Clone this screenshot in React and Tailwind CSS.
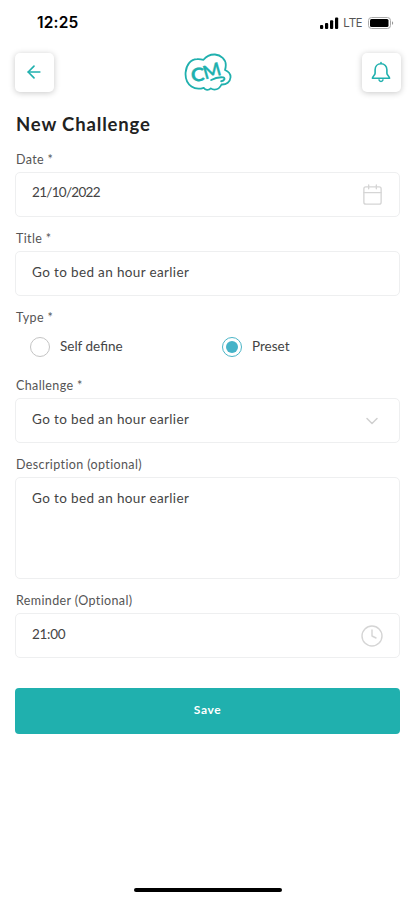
import { ArrowLeft, Calendar, ChevronDown, Clock } from 'lucide-react';

function StatusBar() {
  return (
    <div className="flex h-[46px] items-center justify-between pl-[37px] pr-[20px]">
      <span className="font-['Inter'] text-[15.5px] font-semibold leading-none tracking-[0.2px] text-black">12:25</span>
      <div className="flex items-center">
        <svg className="h-[12px] w-[19px]" viewBox="0 0 19 12" fill="#000">
          <rect x="0" y="8" width="3.2" height="4" rx="1" />
          <rect x="5" y="6" width="3.2" height="6" rx="1" />
          <rect x="10" y="3.2" width="3.2" height="8.8" rx="1" />
          <rect x="15" y="0.5" width="3.2" height="11.5" rx="1" />
        </svg>
        <span className="ml-[4px] w-[21px] font-['Open_Sans'] text-[12.5px] leading-none tracking-[-0.5px] text-[#555]">LTE</span>
        <svg className="ml-[4px] h-[12px] w-[27px]" viewBox="0 0 27 12">
          <rect x="0.5" y="0.5" width="22" height="11" rx="3" fill="none" stroke="#aaa" />
          <rect x="2" y="2" width="18.5" height="8" rx="1.5" fill="#000" />
          <path d="M24 4.2c1.6.5 1.6 3.1 0 3.6z" fill="#999" />
        </svg>
      </div>
    </div>
  );
}

function Logo() {
  return (
    <svg className="h-[39px] w-[48px]" viewBox="0 0 48 39" fill="none" stroke="#20b0ae" strokeLinecap="round" strokeLinejoin="round">
      <path
        strokeWidth="1.8"
        d="M19.5 6.8C22.5 3 26.5 1.3 31 1.5C37 2 41.8 6.5 41.8 12C41.8 13.8 41.5 15.5 41 17C44.5 18.5 46.8 21 46.5 24.5C46.2 28.8 42.5 31.8 37.5 31.5C36 34.8 33.5 36.6 30.5 36.6C29 36.6 27.8 36.2 26.8 35.4C24.5 37.6 21.3 37.2 19.7 34.8C16 36 11.5 36.3 7.5 33.5C3 30.2 1.2 25 1.6 19.5C2.3 11.5 6.8 6.3 13 6.2C15.2 6.1 17.5 6.3 19.5 6.8Z"
      />
      <g fill="#20b0ae" strokeWidth="0.3" className="font-['Lato'] text-[18.5px] font-bold">
        <text transform="translate(7.6 28.8) rotate(-5)" textLength="13.5" lengthAdjust="spacingAndGlyphs">C</text>
        <text transform="translate(21 26.6) rotate(-16)" textLength="18" lengthAdjust="spacingAndGlyphs" className="font-semibold">M</text>
      </g>
      <path strokeWidth="1.9" d="M27.2 27C31 24.9 36 24 39.3 24.4C41.6 25.2 40.3 28 37.2 28.2" />
    </svg>
  );
}

function BellIcon() {
  return (
    <svg className="h-[22px] w-[22px]" viewBox="0 0 22 22" fill="none" stroke="currentColor" strokeWidth="1.6" strokeLinecap="round" strokeLinejoin="round">
      <path d="M11 1.6V2.8M11 2.8C7.4 2.8 5.1 5.4 5.1 8.8V12.2C5.1 14.2 2.4 15.2 2.4 17.3H19.6C19.6 15.2 16.9 14.2 16.9 12.2V8.8C16.9 5.4 14.6 2.8 11 2.8Z" />
      <path d="M9 18.9C9.6 21 12.4 21 13 18.9" />
    </svg>
  );
}

function IconButton({ label, children }) {
  return (
    <button
      aria-label={label}
      className="flex h-[39px] w-[39px] items-center justify-center rounded-[5px] bg-white pr-[1px] pb-[1px] text-[#20b0ae] shadow-[0_1px_6px_rgba(0,0,0,0.22)]"
    >
      {children}
    </button>
  );
}

function Label({ children }) {
  return (
    <div className="mt-[13px] mb-[5px] h-[16px] whitespace-nowrap pl-px text-[12.5px] leading-[17px] tracking-[0.38px] text-[#555]">{children}</div>
  );
}

function Field({ value, icon, className = 'h-[45px]' }) {
  return (
    <div className={`flex items-start justify-between rounded-[5px] border border-[#eeeff0] bg-white pl-[16px] pr-[15px] ${className}`}>
      <span className="mt-[11px] whitespace-nowrap text-[13.5px] leading-[18px] text-[#444]">{value}</span>
      {icon}
    </div>
  );
}

function Radio({ label, checked }) {
  return (
    <div className="flex h-[22px] w-[192px] shrink-0 items-center">
      <span
        className={`flex h-[20px] w-[20px] items-center justify-center rounded-full border ${
          checked ? 'border-[#4bb5c7]' : 'border-[#c4c4c4]'
        }`}
      >
        {checked && <span className="h-[12px] w-[12px] rounded-full bg-[#45b3c8]"></span>}
      </span>
      <span className="mb-[3px] ml-[10px] text-[13.5px] leading-[18px] text-[#444]">{label}</span>
    </div>
  );
}

export default function App() {
  return (
    <div className="flex h-[900px] w-[415px] flex-col bg-white font-['Lato',sans-serif]">
      <StatusBar />

      <div className="mt-[7px] flex items-center justify-between pl-[15px] pr-[14px]">
        <IconButton label="Back">
          <ArrowLeft size={20} strokeWidth={2} />
        </IconButton>
        <Logo />
        <IconButton label="Notifications">
          <BellIcon />
        </IconButton>
      </div>

      <div className="flex flex-col px-[15px]">
        <h1 className="mt-[20px] h-[24px] whitespace-nowrap pl-px text-[18.5px] font-bold leading-[24px] tracking-[0.85px] text-[#222]">
          New Challenge
        </h1>

        <div className="mt-[2px]">
          <Label>Date *</Label>
        </div>
        <Field
          value={<span className="relative -top-px tracking-[-0.7px]">21/10/2022</span>}
          icon={<Calendar size={23} strokeWidth={1.4} className="mt-[10px] text-[#d5d5d5]" />}
        />

        <Label>Title *</Label>
        <Field value={<span className="tracking-[0.36px]">Go to bed an hour earlier</span>} />

        <Label>Type *</Label>
        <div className="mt-[6px] mb-[6px] flex h-[22px] pl-[15px]">
          <Radio label="Self define" />
          <Radio label="Preset" checked />
        </div>

        <Label>Challenge *</Label>
        <Field
          value={<span className="tracking-[0.36px]">Go to bed an hour earlier</span>}
          icon={<ChevronDown size={20} strokeWidth={1.8} className="mt-[12px] mr-[2px] text-[#d0d0d0]" />}
        />

        <Label>Description (optional)</Label>
        <Field value={<span className="tracking-[0.36px]">Go to bed an hour earlier</span>} className="h-[102px]" />

        <Label>Reminder (Optional)</Label>
        <Field
          value={<span className="relative tracking-[-0.3px]">21:00</span>}
          icon={<Clock size={24} strokeWidth={1.4} className="mt-[10px] text-[#d5d5d5]" />}
        />

        <button className="mt-[30px] h-[46px] rounded-[4px] bg-[#20b0ae] pb-[2px] text-[12px] font-bold tracking-[0.6px] text-white">Save</button>
      </div>

      <div className="mt-auto mb-[8px] ml-[134px] h-[4px] w-[148px] rounded-full bg-black"></div>
    </div>
  );
}
